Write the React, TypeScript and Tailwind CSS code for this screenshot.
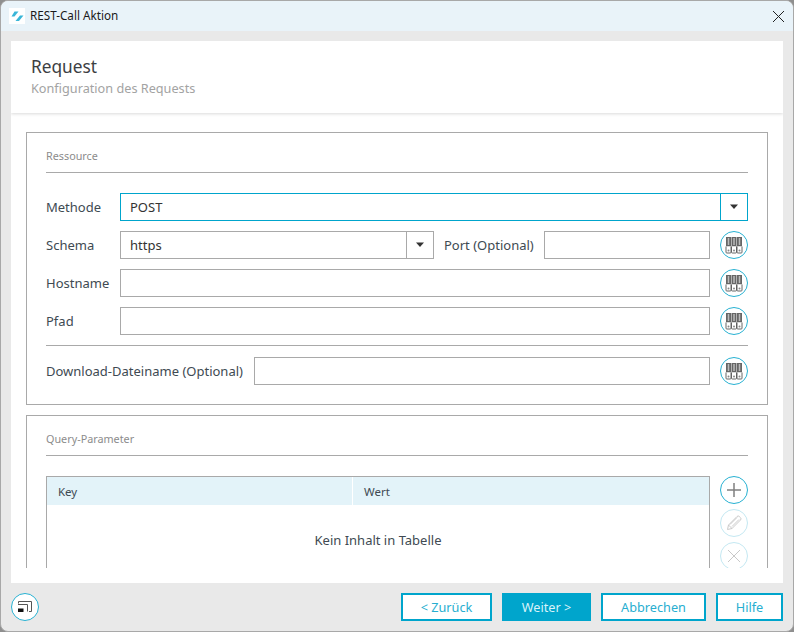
import React from "react";

const Binder = () => (
  <svg width="18" height="18" viewBox="0 0 18 18" fill="none">
    {[1.5, 7, 12.5].map((x) => (
      <g key={x}>
        <rect x={x - 0.5} y="1" width="5" height="9.5" fill="#666" />
        <rect x={x + 1.25} y="2" width="1.5" height="7" fill="#bbb" />
        <path d={`M${x - 0.5} 10.5v5.7a0.8 0.8 0 0 0 0.8 0.8h3.4a0.8 0.8 0 0 0 0.8-0.8V10.5`} stroke="#555" strokeWidth="0.9" fill="#fff" />
        <circle cx={x + 2} cy="14.5" r="1" fill="#888" />
      </g>
    ))}
  </svg>
);

const Circle = ({ children, faded }: { children: React.ReactNode; faded?: boolean }) => (
  <button
    className={`w-[28px] h-[28px] shrink-0 rounded-full border-[1.5px] bg-white flex items-center justify-center ${
      faded ? "border-[#c4e8f2]" : "border-[#27b1d2]"
    }`}
  >
    {children}
  </button>
);

const Input = ({ className = "" }: { className?: string }) => (
  <div className={`h-[28px] border border-[#a9a9a9] bg-white ${className}`} />
);

const Arrow = () => (
  <svg width="10" height="6" viewBox="0 0 10 6">
    <path d="M1 0.5h8L5 5z" fill="#333" />
  </svg>
);

const Label = ({ children, className = "" }: { children: React.ReactNode; className?: string }) => (
  <span className={`text-[13px] text-[#404a52] whitespace-nowrap pt-[2px] ${className}`}>{children}</span>
);

const Legend = ({ children }: { children: React.ReactNode }) => (
  <div className="h-[25px] border-b border-[#a9a9a9] text-[10.8px] text-[#8c8c8c] leading-[16px]">{children}</div>
);

const FootBtn = ({ children, w, primary }: { children: React.ReactNode; w: string; primary?: boolean }) => (
  <button
    className={`h-[28px] border-2 border-[#00a5cc] text-[12.7px] pt-[2px] flex items-center justify-center ${w} ${
      primary ? "bg-[#00a5cc] text-[#d8f3fa]" : "bg-white text-[#27aed0]"
    }`}
  >
    {children}
  </button>
);

export default function App() {
  return (
    <div className="w-[794px] h-[632px] bg-[#8f8f8f] font-['Open_Sans','Noto_Sans',sans-serif]">
      <div className="w-full h-full rounded-[8px] overflow-hidden border border-[#a8a8a8] flex flex-col bg-[#e9e9e9]">
        <div className="h-[30px] shrink-0 bg-[#e9f3f9] flex items-center pl-[8px] pr-[8px]">
          <div className="w-[16px] h-[16px] bg-white flex items-center justify-center">
            <svg width="13" height="11" viewBox="0 0 13 11">
              <path d="M3.5 0.5h4L3.5 5.5H0.5z" fill="#39b6d8" />
              <path d="M9 4.5h3.5L8 10H4.5z" fill="#39b6d8" />
            </svg>
          </div>
          <span className="ml-[5px] text-[11.7px] text-[#1a1a1a]">REST-Call Aktion</span>
          <svg className="ml-auto" width="13" height="13" viewBox="0 0 13 13">
            <path d="M1 1l11 11M12 1L1 12" stroke="#222" strokeWidth="1" />
          </svg>
        </div>
        <div className="flex-1 flex flex-col px-[10px] pt-[10px] min-h-0">
          <div className="h-[542px] bg-white flex flex-col overflow-hidden shrink-0">
            <div className="h-[72px] shrink-0 shadow-[0_1px_3px_rgba(0,0,0,0.15)] pl-[20px] pt-[14px] relative">
              <div className="text-[17.3px] leading-[24px] text-[#3c4043]">Request</div>
              <div className="text-[12.7px] leading-[18px] text-[#a3a3a3]">Konfiguration des Requests</div>
            </div>
            <div className="h-[455px] shrink-0 overflow-hidden px-[15px] pt-[19px]">
              <div className="h-[273px] border border-[#a9a9a9] px-[19px] pt-[15px]">
                <Legend>Ressource</Legend>
                <div className="flex flex-col gap-[10px] mt-[20px]">
                  <div className="flex items-center">
                    <Label className="w-[74px]">Methode</Label>
                    <div className="flex-1 h-[28px] border border-[#00a5cc] flex items-center">
                      <span className="flex-1 pl-[9px] pt-[2px] text-[13px] text-[#333]">POST</span>
                      <div className="w-[27px] h-full border-l border-[#00a5cc] flex items-center justify-center">
                        <Arrow />
                      </div>
                    </div>
                  </div>
                  <div className="flex items-center">
                    <Label className="w-[74px]">Schema</Label>
                    <div className="w-[314px] h-[28px] border border-[#a9a9a9] flex items-center">
                      <span className="flex-1 pl-[9px] pt-[2px] text-[13px] text-[#333]">https</span>
                      <div className="w-[27px] h-full border-l border-[#a9a9a9] flex items-center justify-center">
                        <Arrow />
                      </div>
                    </div>
                    <Label className="ml-[10px] w-[100px]">Port (Optional)</Label>
                    <Input className="w-[166px]" />
                    <div className="ml-[10px]">
                      <Circle>
                        <Binder />
                      </Circle>
                    </div>
                  </div>
                  <div className="flex items-center">
                    <Label className="w-[74px]">Hostname</Label>
                    <Input className="flex-1" />
                    <div className="ml-[10px]">
                      <Circle>
                        <Binder />
                      </Circle>
                    </div>
                  </div>
                  <div className="flex items-center">
                    <Label className="w-[74px]">Pfad</Label>
                    <Input className="flex-1" />
                    <div className="ml-[10px]">
                      <Circle>
                        <Binder />
                      </Circle>
                    </div>
                  </div>
                </div>
                <div className="border-t border-[#a9a9a9] mt-[10px] pt-[11px] flex items-center">
                  <Label className="w-[208px]">Download-Dateiname (Optional)</Label>
                  <Input className="flex-1" />
                  <div className="ml-[10px]">
                    <Circle>
                      <Binder />
                    </Circle>
                  </div>
                </div>
              </div>
              <div className="mt-[10px] h-[200px] border border-[#a9a9a9] px-[19px] pt-[15px]">
                <Legend>Query-Parameter</Legend>
                <div className="flex mt-[20px] gap-[10px]">
                  <div className="flex-1 h-[140px] border border-[#a9a9a9]">
                    <div className="h-[28px] bg-[#e3f3f9] flex text-[11.5px] text-[#404a52]">
                      <div className="w-[306px] pl-[11px] pt-[2px] border-r border-white flex items-center">Key</div>
                      <div className="flex-1 pl-[11px] pt-[2px] flex items-center">Wert</div>
                    </div>
                    <div className="h-[70px] pt-[2px] flex items-center justify-center text-[13px] text-[#404a52]">
                      Kein Inhalt in Tabelle
                    </div>
                  </div>
                  <div className="flex flex-col gap-[5px]">
                    <Circle>
                      <svg width="18" height="18" viewBox="0 0 18 18">
                        <path d="M9 2v14M2 9h14" stroke="#808080" strokeWidth="1.5" />
                      </svg>
                    </Circle>
                    <Circle faded>
                      <svg width="18" height="18" viewBox="0 0 18 18" fill="none">
                        <path
                          d="M2.5 15.5l1-4.5L12 2.5a1.6 1.6 0 0 1 2.3 0l1.2 1.2a1.6 1.6 0 0 1 0 2.3L7 14.5zM3.5 11l3.5 3.5M5 10.5l7-7M7 12.5l7-7"
                          stroke="#c4c4c4"
                          strokeWidth="0.9"
                        />
                      </svg>
                    </Circle>
                    <Circle faded>
                      <svg width="16" height="16" viewBox="0 0 16 16">
                        <path d="M2 2l12 12M14 2L2 14" stroke="#c8c8c8" strokeWidth="1" />
                      </svg>
                    </Circle>
                  </div>
                </div>
              </div>
            </div>
          </div>
          <div className="flex items-start pt-[10px]">
            <Circle>
              <svg width="16" height="14" viewBox="0 0 16 14" fill="none">
                <path d="M1.5 3.5V1.5h13v10h-2.5" stroke="#555" strokeWidth="1" />
                <path d="M1 4.5h9.5v7" stroke="#555" strokeWidth="1" />
                <rect x="1" y="8.5" width="5.5" height="3.5" fill="#111" />
              </svg>
            </Circle>
            <div className="ml-auto flex gap-[10px]">
              <FootBtn w="w-[91px]">&lt; Zurück</FootBtn>
              <FootBtn w="w-[89px]" primary>
                Weiter &gt;
              </FootBtn>
              <FootBtn w="w-[105px]">Abbrechen</FootBtn>
              <FootBtn w="w-[67px]">Hilfe</FootBtn>
            </div>
          </div>
        </div>
      </div>
    </div>
  );
}
